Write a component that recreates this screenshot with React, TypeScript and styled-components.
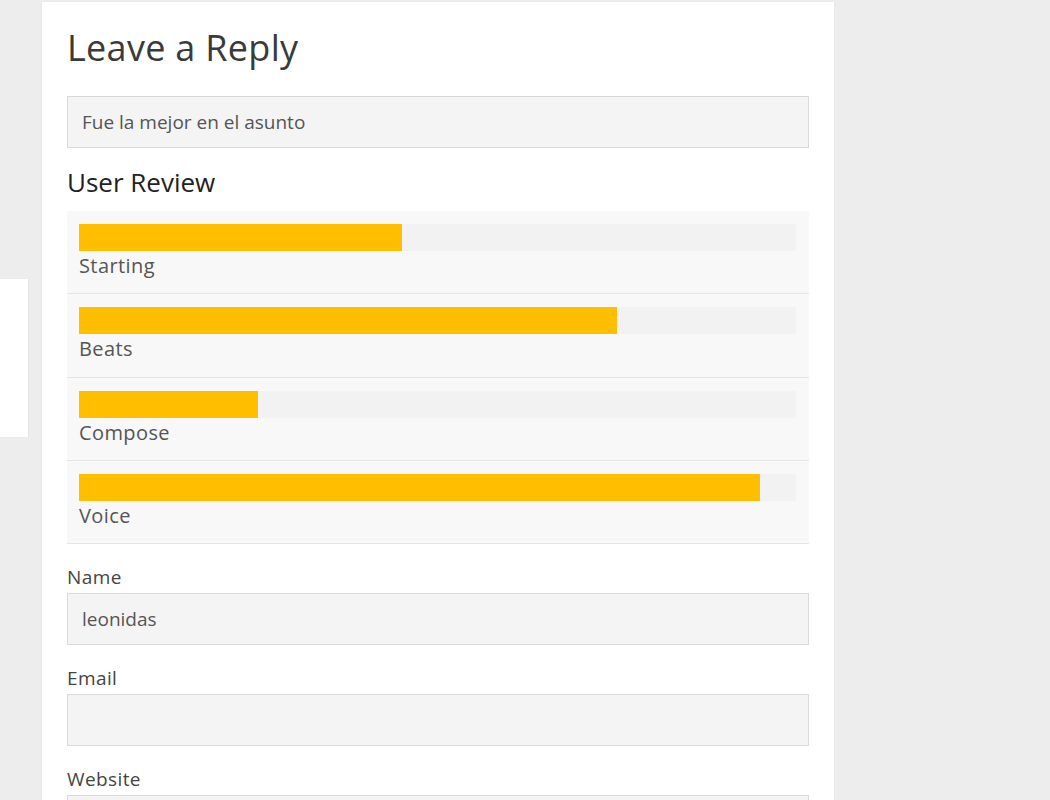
import React from "react"
import styled, { createGlobalStyle } from "styled-components"

const GlobalStyle = createGlobalStyle`
  html, body {
    margin: 0;
    padding: 0;
    background: #ededed;
    font-family: "Open Sans", "Liberation Sans", sans-serif;
  }
`

const Page = styled.div`
  display: flex;
  align-items: flex-start;
  min-height: 800px;
`

const SideStub = styled.aside`
  width: 28px;
  height: 158px;
  margin-top: 279px;
  background: #fff;
  box-shadow: 1px 0 1px rgba(0, 0, 0, 0.04);
`

const Card = styled.section`
  width: 792px;
  box-sizing: border-box;
  margin: 2px 0 0 14px;
  padding: 24px 25px 40px;
  background: #fff;
  box-shadow: 0 0 2px rgba(0, 0, 0, 0.06);
`

const Title = styled.h2`
  margin: 0 0 26px;
  font-size: 36px;
  line-height: 44px;
  font-weight: 400;
  letter-spacing: 0.3px;
  color: #3a3a3a;
`

const SubTitle = styled.h3`
  margin: 18px 0 13px;
  font-size: 26px;
  line-height: 32px;
  font-weight: 400;
  color: #222;
`

const TextInput = styled.input`
  display: block;
  width: 100%;
  height: 52px;
  box-sizing: border-box;
  margin: 0;
  padding: 0 14px;
  border: 1px solid #d9d9d9;
  background: #f4f4f4;
  font-family: "Open Sans", "Liberation Sans", sans-serif;
  font-size: 19px;
  color: #555;
  outline: none;
`

const Review = styled.div`
  background: #f8f8f8;
  margin-bottom: 2px;
`

const ReviewRow = styled.div`
  padding: 13px 13px 14.34px 12px;
  border-bottom: 1px solid #e5e5e5;
`

const Track = styled.div`
  height: 27px;
  background: #f2f2f2;
`

const Fill = styled.div`
  height: 100%;
  background: #ffbf00;
`

const RowLabel = styled.div`
  margin-top: 2px;
  font-size: 20px;
  line-height: 26px;
  letter-spacing: 0.4px;
  color: #555;
`

const Field = styled.div`
  margin-top: 21px;
`

const Label = styled.label`
  display: block;
  margin-bottom: 4px;
  font-size: 19px;
  line-height: 24px;
  letter-spacing: 0.4px;
  color: #444;
`

const ratings = [
  { name: "Starting", value: 45 },
  { name: "Beats", value: 75 },
  { name: "Compose", value: 25 },
  { name: "Voice", value: 95 },
]

const fields = [
  { label: "Name", value: "leonidas" },
  { label: "Email", value: "" },
  { label: "Website", value: "" },
]

const App = () => {
  return (
    <Page>
      <GlobalStyle />
      <SideStub />
      <Card>
        <Title>Leave a Reply</Title>
        <TextInput defaultValue="Fue la mejor en el asunto" />
        <SubTitle>User Review</SubTitle>
        <Review>
          {ratings.map((r) => (
            <ReviewRow key={r.name}>
              <Track>
                <Fill style={{ width: `${r.value}%` }} />
              </Track>
              <RowLabel>{r.name}</RowLabel>
            </ReviewRow>
          ))}
        </Review>
        {fields.map((f) => (
          <Field key={f.label}>
            <Label>{f.label}</Label>
            <TextInput defaultValue={f.value} />
          </Field>
        ))}
      </Card>
    </Page>
  )
}

export default App
